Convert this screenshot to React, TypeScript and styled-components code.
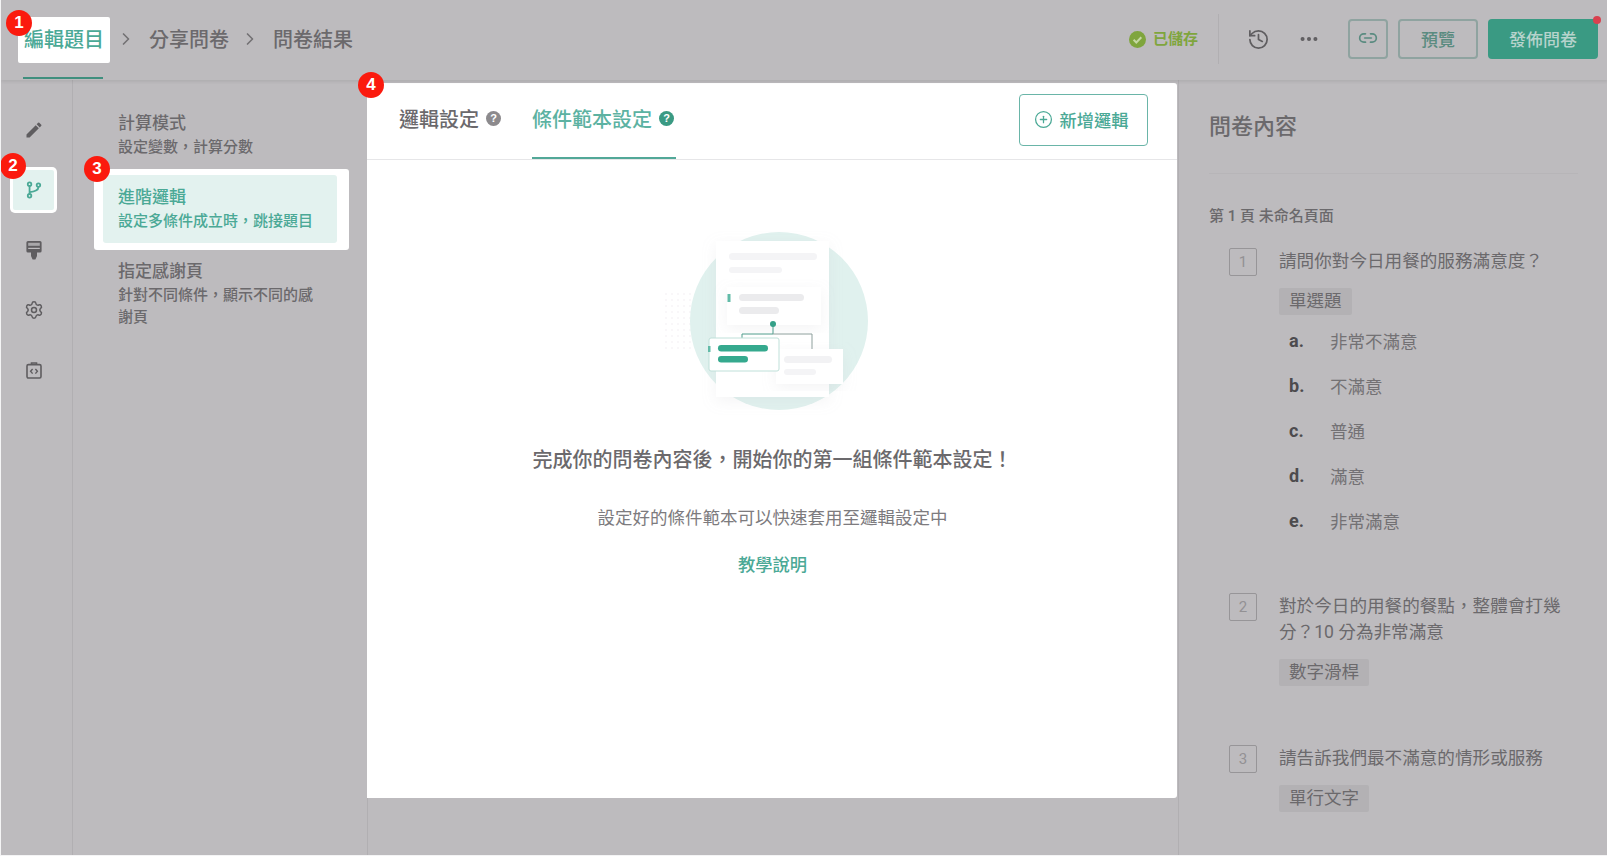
import React from "react";
import styled, { createGlobalStyle } from "styled-components";
import { ChevronRight, CirclePlus, Ellipsis, History, Link2, Settings } from "lucide-react";
import { MdEdit } from "react-icons/md";

const FONT = `Roboto, "Noto Sans CJK TC", "Noto Sans", sans-serif`;
const C = {
  bg: "#bdbbbe",
  line: "#b1afb2",
  ink: "#6b696c",
  soft: "#737174",
  green: "#4ba996",
  tint: "#e3f2ef",
  red: "#fb1a0e",
};

const Global = createGlobalStyle`
  html, body { margin: 0; padding: 0; background: #f4f4f5; }
  * { box-sizing: border-box; }
  body { font-family: ${FONT}; overflow: hidden; }
`;

const Page = styled.div`
  width: 1607px;
  height: 855px;
  margin-left: 1px;
  background: ${C.bg};
  display: flex;
  flex-direction: column;
  color: ${C.ink};
  overflow: hidden;
`;

const Header = styled.header`
  height: 80px;
  flex: none;
  display: flex;
  align-items: stretch;
  padding: 0 10px 0 17px;
  box-shadow: 0 2px 3px rgba(0, 0, 0, 0.07);
  position: relative;
  z-index: 1;
`;

const Steps = styled.nav`
  display: flex;
  align-items: stretch;
  flex: 1;
`;

const Step = styled.div<{ $active?: boolean }>`
  position: relative;
  display: flex;
  align-items: center;
  padding-bottom: ${(p) => (p.$active ? "0" : "4px")};
  font-size: 20px;
  font-weight: 500;
  color: ${(p) => (p.$active ? C.green : C.ink)};
  &::after {
    content: "";
    display: ${(p) => (p.$active ? "block" : "none")};
    position: absolute;
    left: 5px;
    right: 7px;
    bottom: 1px;
    height: 2px;
    background: #3f8f7e;
  }
`;

const StepMark = styled.span`
  height: 46px;
  width: 92px;
  background: #fff;
  border-radius: 2px;
  display: flex;
  align-items: center;
  padding: 0 0 3px 6px;
`;

const StepArrow = styled.span`
  display: flex;
  align-items: center;
  padding-bottom: 3px;
  color: ${C.soft};
  margin: 0 13px 0 6px;
  & ~ & { margin-left: 11px; }
`;

const Badge = styled.span<{ $top: number; $left: number }>`
  position: absolute;
  top: ${(p) => p.$top}px;
  left: ${(p) => p.$left}px;
  width: 26px;
  height: 26px;
  border-radius: 50%;
  background: ${C.red};
  color: #fff;
  font: 700 17px/26px "Liberation Sans", Arial, sans-serif;
  text-align: center;
  z-index: 5;
`;

const Tools = styled.div`
  display: flex;
  align-items: center;
  padding-bottom: 2px;
`;

const Saved = styled.span`
  display: flex;
  align-items: center;
  gap: 7px;
  color: #7fa53d;
  font-size: 15px;
  font-weight: 700;
  line-height: 20px;
  margin-right: 20px;
`;

const ToolDivider = styled.span`
  width: 1px;
  height: 50px;
  background: ${C.line};
  margin-right: 28px;
`;

const ToolIcon = styled.span`
  display: flex;
  color: #5f5d60;
  margin-right: 28px;
`;

const OutlineButton = styled.button<{ $w: number }>`
  width: ${(p) => p.$w}px;
  height: 40px;
  border: 2px solid #8fa3a0;
  border-radius: 4px;
  background: transparent;
  color: #5a8b80;
  font: 500 17px ${FONT};
  display: flex;
  align-items: center;
  justify-content: center;
  padding: 0 0 2px;
  margin-right: 10px;
`;

const PublishButton = styled.button`
  position: relative;
  width: 110px;
  height: 40px;
  border: 0;
  border-radius: 4px;
  background: #3a9a83;
  color: #b6d3cc;
  font: 500 17px ${FONT};
  padding: 0 0 2px;
  &::after {
    content: "";
    position: absolute;
    top: -3px;
    right: -3px;
    width: 8px;
    height: 8px;
    border-radius: 50%;
    background: #d9414f;
  }
`;

const Body = styled.div`
  flex: 1;
  min-height: 0;
  display: flex;
`;

const Rail = styled.aside`
  position: relative;
  width: 72px;
  flex: none;
  border-right: 1px solid ${C.line};
  display: flex;
  flex-direction: column;
  align-items: center;
  gap: 20px;
  padding: 30px 6px 0 0;
`;

const RailItem = styled.div<{ $active?: boolean }>`
  position: relative;
  width: 41px;
  height: 40px;
  display: flex;
  align-items: center;
  justify-content: center;
  border-radius: 2px;
  color: ${(p) => (p.$active ? C.green : "#5f5d60")};
  background: ${(p) => (p.$active ? C.tint : "transparent")};
  box-shadow: ${(p) => (p.$active ? "0 0 0 3px #fff" : "none")};
`;

const SubNav = styled.div`
  position: relative;
  width: 294px;
  flex: none;
  padding: 21px 30px 0 30px;
`;

const SubItem = styled.div<{ $active?: boolean }>`
  padding: 11px 15px 11px;
  border-radius: 3px;
  background: ${(p) => (p.$active ? C.tint : "transparent")};
  color: ${(p) => (p.$active ? C.green : C.ink)};
`;

const SubFrame = styled.div`
  position: relative;
  margin: 0 -12px -1px -9px;
  padding: 6px 12px 7px 9px;
  background: #fff;
  border-radius: 3px;
`;

const SubTitle = styled.div`
  font-size: 17px;
  font-weight: 500;
  line-height: 22px;
`;

const SubText = styled.div`
  font-size: 15px;
  font-weight: 500;
  line-height: 22px;
  margin-top: 2px;
`;

const Main = styled.main`
  position: relative;
  flex: none;
  width: 811px;
  border-left: 1px solid ${C.line};
  padding-top: 3px;
`;

const Card = styled.section`
  height: 715px;
  width: 810px;
  margin-left: -1px;
  background: #fff;
  border-radius: 0 3px 3px 0;
  display: flex;
  flex-direction: column;
`;

const CardTabs = styled.div`
  height: 77px;
  flex: none;
  display: flex;
  align-items: stretch;
  padding: 0 29px 0 32px;
  border-bottom: 1px solid #e6e6e8;
`;

const CardTab = styled.div<{ $active?: boolean }>`
  display: flex;
  align-items: center;
  gap: 7px;
  height: 76px;
  padding-bottom: 4px;
  margin-right: 31px;
  padding-right: ${(p) => (p.$active ? "2px" : "0")};
  font-size: 20px;
  font-weight: 500;
  color: ${(p) => (p.$active ? "#5cb2a2" : C.ink)};
  border-bottom: 2px solid ${(p) => (p.$active ? "#52a898" : "transparent")};
`;

const Help = styled.span<{ $active?: boolean }>`
  width: 15px;
  height: 15px;
  border-radius: 50%;
  background: ${(p) => (p.$active ? "#3a9a83" : "#8c8a8d")};
  color: #fff;
  font: 700 11px/15px "Liberation Sans", Arial, sans-serif;
  text-align: center;
`;

const AddButton = styled.button`
  margin: 11px 0 0 auto;
  width: 129px;
  height: 52px;
  border: 1px solid #6ab5a8;
  border-radius: 4px;
  background: #fff;
  color: ${C.green};
  font: 500 17.2px ${FONT};
  display: flex;
  align-items: center;
  justify-content: center;
  gap: 7px;
  padding: 0 5px 2px 0;
`;

const Empty = styled.div`
  flex: 1;
  display: flex;
  flex-direction: column;
  align-items: center;
  padding: 49px 0 0 1px;
`;

const Art = styled.svg`
  width: 300px;
  height: 220px;
  flex: none;
  margin-bottom: 16px;
`;

const EmptyTitle = styled.h2`
  margin: 0;
  font-size: 20px;
  font-weight: 500;
  line-height: 30px;
  color: ${C.ink};
`;

const EmptyText = styled.p`
  margin: 31px 0 0;
  font-size: 17.5px;
  line-height: 24px;
  color: #7d7b7e;
`;

const EmptyLink = styled.a`
  margin-top: 23px;
  font-size: 17.3px;
  font-weight: 500;
  line-height: 24px;
  color: ${C.green};
`;

const Outline = styled.aside`
  flex: 1;
  min-width: 0;
  border-left: 1px solid ${C.line};
  padding: 0 30px 0 30px;
  overflow: hidden;
`;

const OutlineTitle = styled.h3`
  margin: 0;
  height: 94px;
  padding-top: 32px;
  font-size: 22px;
  font-weight: 500;
  line-height: 30px;
  color: ${C.ink};
  border-bottom: 1px solid #b7b5b8;
`;

const PageLabel = styled.div`
  margin-top: 32px;
  font-size: 15px;
  font-weight: 500;
  line-height: 20px;
  color: ${C.ink};
`;

const Question = styled.div<{ $gap: number }>`
  display: grid;
  grid-template-columns: 28px 1fr;
  column-gap: 22px;
  margin: ${(p) => p.$gap}px 0 0 20px;
`;

const QNum = styled.span`
  width: 28px;
  height: 28px;
  border: 1px solid #979598;
  border-radius: 2px;
  color: #939194;
  font-size: 15px;
  line-height: 26px;
  text-align: center;
`;

const QText = styled.div`
  font-size: 17.6px;
  line-height: 26px;
  color: ${C.ink};
`;

const Tag = styled.span`
  display: inline-block;
  margin-top: 14px;
  height: 27px;
  padding: 0 10px;
  background: #b3b1b4;
  border-radius: 2px;
  font-size: 17.5px;
  line-height: 27px;
  color: ${C.ink};
`;

const Options = styled.ul`
  list-style: none;
  margin: 3px 0 0;
  padding: 0 0 0 10px;
`;

const Option = styled.li`
  display: flex;
  height: 45px;
  align-items: center;
  font-size: 17.5px;
  color: ${C.soft};
`;

const OptionKey = styled.b`
  width: 41px;
  font-weight: 700;
  font-size: 18px;
  color: #4d4b4e;
`;

function CheckBadge() {
  return (
    <svg width="17" height="17" viewBox="0 0 17 17">
      <circle cx="8.5" cy="8.5" r="8.5" fill="#7fa53d" />
      <path d="M4.6 8.8l2.7 2.7 5-5.2" fill="none" stroke="#c5d8a3" strokeWidth="2" />
    </svg>
  );
}

function BranchIcon() {
  return (
    <svg width="16" height="18" viewBox="0 0 18 20" fill="none" stroke={C.green} strokeWidth="2">
      <circle cx="4" cy="3.500" r="2" />
      <circle cx="14" cy="4.500" r="2" />
      <circle cx="4" cy="16.500" r="2" />
      <path d="M4 5.500v9" />
      <path d="M14 6.500c0 4-4 5-10 6" />
    </svg>
  );
}

function RollerIcon() {
  return (
    <svg width="16" height="19" viewBox="0 0 16 19" fill="#5f5d60">
      <path d="M2 0h12a1.6 1.6 0 0 1 1.6 1.6V10a1.6 1.6 0 0 1-1.6 1.6h-3V15l-1.6 3.5H6.6L5 15v-3.4H2A1.6 1.6 0 0 1 .4 10V1.6A1.6 1.6 0 0 1 2 0z" />
      <rect x="2.2" y="1.8" width="11.6" height="3" fill="#a9a7aa" />
      <rect x="2.2" y="6.8" width="11.6" height="1.2" fill="#bdbbbe" />
    </svg>
  );
}

function CodeBoardIcon() {
  return (
    <svg width="16" height="17" viewBox="0 0 16 17" fill="none" stroke="#5f5d60" strokeWidth="1.6">
      <rect x="1" y="2.6" width="14" height="13.4" rx="1.4" />
      <path d="M5.5 2.6V1h5v1.6" />
      <path d="M6.6 7l-2 2.3 2 2.3M9.4 7l2 2.3-2 2.3" strokeWidth="1.4" />
    </svg>
  );
}

function EmptyArt() {
  const dots: React.ReactNode[] = [];
  for (let x = 47; x < 90; x += 6) {
    for (let y = 85; y < 140; y += 6) {
      dots.push(<circle key={`${x}-${y}`} cx={x} cy={y} r="0.9" fill="#f6f4f7" />);
    }
  }
  return (
    <Art viewBox="4 0 300 220">
      <defs>
        <filter id="soft" x="-20%" y="-20%" width="140%" height="140%">
          <feDropShadow dx="0" dy="4" stdDeviation="7" floodColor="#c4c4c8" floodOpacity="0.18" />
        </filter>
      </defs>
      {dots}
      <circle cx="160" cy="112" r="89" fill="#e0f1ee" />
      <rect x="97" y="32" width="113" height="156" fill="#fff" filter="url(#soft)" />
      <rect x="110" y="44" width="88" height="7" rx="3.5" fill="#f4f4f6" />
      <rect x="110" y="58" width="53" height="6" rx="3" fill="#f4f4f6" />
      <rect x="108" y="78" width="94" height="38" fill="#fff" filter="url(#soft)" />
      <rect x="108.500" y="85" width="3" height="8" fill="#62bba8" />
      <rect x="120" y="85" width="65" height="7" rx="3.500" fill="#ebebed" />
      <rect x="120" y="98" width="40" height="7" rx="3.500" fill="#ebebed" />
      <path d="M154 116v9h-31v8" fill="none" stroke="#4f9c8c" strokeWidth="1" />
      <path d="M154 125h39v15" fill="none" stroke="#8d9f9c" strokeWidth="1" />
      <circle cx="154" cy="115" r="3" fill="#35a088" />
      <rect x="157" y="140" width="67" height="35" fill="#fff" filter="url(#soft)" />
      <rect x="165" y="147" width="48" height="7" rx="3.500" fill="#f2f2f4" />
      <rect x="165" y="160" width="32" height="6" rx="3" fill="#f4f4f6" />
      <rect x="90" y="129" width="70" height="33" rx="2" fill="#fff" stroke="#bfe0d9" strokeWidth="1" />
      <rect x="89" y="137" width="2.500" height="6" fill="#62bba8" />
      <rect x="99" y="136" width="50" height="6.500" rx="3.200" fill="#35a98e" />
      <rect x="99" y="147" width="30" height="6.500" rx="3.200" fill="#35a98e" />
    </Art>
  );
}

const questions = [
  {
    n: 1,
    gap: 22,
    text: "請問你對今日用餐的服務滿意度？",
    tag: "單選題",
    options: ["非常不滿意", "不滿意", "普通", "滿意", "非常滿意"],
  },
  { n: 2, gap: 50, text: "對於今日的用餐的餐點，整體會打幾分？10 分為非常滿意", tag: "數字滑桿" },
  { n: 3, gap: 59, text: "請告訴我們最不滿意的情形或服務", tag: "單行文字" },
];

const keys = ["a.", "b.", "c.", "d.", "e."];

export default function App() {
  return (
    <>
      <Global />
      <Page>
        <Header>
          <Badge $top={10} $left={5}>1</Badge>
          <Steps>
            <Step $active><StepMark>編輯題目</StepMark></Step>
            <StepArrow><ChevronRight size={20} strokeWidth={2} /></StepArrow>
            <Step>分享問卷</Step>
            <StepArrow><ChevronRight size={20} strokeWidth={2} /></StepArrow>
            <Step>問卷結果</Step>
          </Steps>
          <Tools>
            <Saved><CheckBadge />已儲存</Saved>
            <ToolDivider />
            <ToolIcon><History size={23} strokeWidth={1.8} /></ToolIcon>
            <ToolIcon><Ellipsis size={22} strokeWidth={2.4} /></ToolIcon>
            <OutlineButton $w={40}><Link2 size={20} strokeWidth={2} /></OutlineButton>
            <OutlineButton $w={80}>預覽</OutlineButton>
            <PublishButton>發佈問卷</PublishButton>
          </Tools>
        </Header>
        <Body>
          <Rail>
            <Badge $top={73} $left={-1}>2</Badge>
            <RailItem><MdEdit size={20} /></RailItem>
            <RailItem $active><BranchIcon /></RailItem>
            <RailItem><RollerIcon /></RailItem>
            <RailItem><Settings size={20} strokeWidth={1.8} /></RailItem>
            <RailItem><CodeBoardIcon /></RailItem>
          </Rail>
          <SubNav>
            <Badge $top={76} $left={11}>3</Badge>
            <SubItem>
              <SubTitle>計算模式</SubTitle>
              <SubText>設定變數，計算分數</SubText>
            </SubItem>
            <SubFrame>
              <SubItem $active>
                <SubTitle>進階邏輯</SubTitle>
                <SubText>設定多條件成立時，跳接題目</SubText>
              </SubItem>
            </SubFrame>
            <SubItem>
              <SubTitle>指定感謝頁</SubTitle>
              <SubText>針對不同條件，顯示不同的感謝頁</SubText>
            </SubItem>
          </SubNav>
          <Main>
            <Badge $top={-8} $left={-10}>4</Badge>
            <Card>
              <CardTabs>
                <CardTab>邏輯設定<Help>?</Help></CardTab>
                <CardTab $active>條件範本設定<Help $active>?</Help></CardTab>
                <AddButton><CirclePlus size={19} strokeWidth={1.6} />新增邏輯</AddButton>
              </CardTabs>
              <Empty>
                <EmptyArt />
                <EmptyTitle>完成你的問卷內容後，開始你的第一組條件範本設定！</EmptyTitle>
                <EmptyText>設定好的條件範本可以快速套用至邏輯設定中</EmptyText>
                <EmptyLink>教學說明</EmptyLink>
              </Empty>
            </Card>
          </Main>
          <Outline>
            <OutlineTitle>問卷內容</OutlineTitle>
            <PageLabel>第 1 頁 未命名頁面</PageLabel>
            {questions.map((q) => (
              <Question key={q.n} $gap={q.gap}>
                <QNum>{q.n}</QNum>
                <div>
                  <QText>{q.text}</QText>
                  <Tag>{q.tag}</Tag>
                  {q.options && (
                    <Options>
                      {q.options.map((o, i) => (
                        <Option key={o}><OptionKey>{keys[i]}</OptionKey>{o}</Option>
                      ))}
                    </Options>
                  )}
                </div>
              </Question>
            ))}
          </Outline>
        </Body>
      </Page>
    </>
  );
}
